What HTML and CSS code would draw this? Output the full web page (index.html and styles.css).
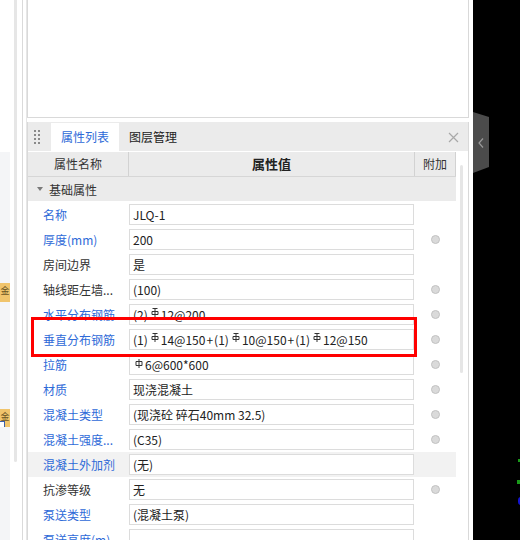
FILE: index.html
```html
<!DOCTYPE html>
<html lang="zh-CN">
<head>
<meta charset="utf-8">
<title>属性列表</title>
<link rel="stylesheet" href="styles.css">
</head>
<body>
<div class="app">
  <div class="side">
    <div class="side-pane">
      <div class="badge b1"><span>金</span></div>
      <div class="badge b2"><span>金</span><i></i></div>
    </div>
    <div class="side-scroll"></div>
    <div class="side-line l1"></div>
    <div class="side-line l2"></div>
  </div>

  <div class="main">
    <div class="canvas"></div>
    <div class="panel">
      <div class="phead">
        <div class="grip"><i></i><i></i><i></i><i></i><i></i><i></i><i></i><i></i></div>
        <div class="tab active">属性列表</div>
        <div class="tab">图层管理</div>
        <svg class="close" width="11" height="11" viewBox="0 0 11 11"><path d="M1 1L10 10M10 1L1 10" stroke="#a8a8a8" stroke-width="1.2" fill="none"/></svg>
      </div>
      <div class="pbody">
        <div class="grid">
          <div class="thead">
            <div class="th c1">属性名称</div>
            <div class="th c2">属性值</div>
            <div class="th c3">附加</div>
          </div>
          <div class="group">
            <svg class="tri" width="6" height="4" viewBox="0 0 6 4"><path d="M0 0H6L3 4Z" fill="#7a7a7a"/></svg>
            <span>基础属性</span>
          </div>

          <div class="row"><div class="lbl blue">名称</div><div class="val"><div class="box">JLQ-1</div></div><div class="add"></div></div>
          <div class="row"><div class="lbl blue">厚度(mm)</div><div class="val"><div class="box">200</div></div><div class="add"><span class="dot"></span></div></div>
          <div class="row"><div class="lbl">房间边界</div><div class="val"><div class="box">是</div></div><div class="add"></div></div>
          <div class="row"><div class="lbl">轴线距左墙...</div><div class="val"><div class="box">(100)</div></div><div class="add"><span class="dot"></span></div></div>
          <div class="row"><div class="lbl blue">水平分布钢筋</div><div class="val"><div class="box">(2)<svg class="rb" width="8" height="9" viewBox="0 0 8 9"><path d="M1.5 0.5H6.5M4 0V9M1 3.5H7V6.5H1Z" stroke="#333" stroke-width="1" fill="none"/></svg>12@200</div></div><div class="add"><span class="dot"></span></div></div>
          <div class="row"><div class="lbl blue">垂直分布钢筋</div><div class="val"><div class="box">(1)<svg class="rb" width="8" height="9" viewBox="0 0 8 9"><path d="M1.5 0.5H6.5M4 0V9M1 3.5H7V6.5H1Z" stroke="#333" stroke-width="1" fill="none"/></svg>14@150<span class="plus">+</span>(1)<svg class="rb" width="8" height="9" viewBox="0 0 8 9"><path d="M1.5 0.5H6.5M4 0V9M1 3.5H7V6.5H1Z" stroke="#333" stroke-width="1" fill="none"/></svg>10@150<span class="plus">+</span>(1)<svg class="rb" width="8" height="9" viewBox="0 0 8 9"><path d="M1.5 0.5H6.5M4 0V9M1 3.5H7V6.5H1Z" stroke="#333" stroke-width="1" fill="none"/></svg>12@150</div></div><div class="add"><span class="dot"></span></div></div>
          <div class="row"><div class="lbl blue">拉筋</div><div class="val"><div class="box"><svg class="rb rb-a" width="8" height="9" viewBox="0 0 8 9"><path d="M4 0V9M1 2.5H7V6.5H1Z" stroke="#333" stroke-width="1" fill="none"/></svg>6@600*600</div></div><div class="add"><span class="dot"></span></div></div>
          <div class="row"><div class="lbl blue">材质</div><div class="val"><div class="box">现浇混凝土</div></div><div class="add"><span class="dot"></span></div></div>
          <div class="row"><div class="lbl blue">混凝土类型</div><div class="val"><div class="box">(现浇砼 碎石40mm 32.5)</div></div><div class="add"><span class="dot"></span></div></div>
          <div class="row"><div class="lbl blue">混凝土强度...</div><div class="val"><div class="box">(C35)</div></div><div class="add"><span class="dot"></span></div></div>
          <div class="row hl"><div class="lbl blue">混凝土外加剂</div><div class="val"><div class="box">(无)</div></div><div class="add"></div></div>
          <div class="row"><div class="lbl">抗渗等级</div><div class="val"><div class="box">无</div></div><div class="add"><span class="dot"></span></div></div>
          <div class="row"><div class="lbl blue">泵送类型</div><div class="val"><div class="box">(混凝土泵)</div></div><div class="add"></div></div>
          <div class="row"><div class="lbl blue">泵送高度(m)</div><div class="val"><div class="box"></div></div><div class="add"></div></div>

          <div class="redbox"></div>
        </div>
        <div class="vscroll"><div class="thumb"></div></div>
      </div>
    </div>
  </div>

  <div class="gutter"></div>

  <div class="dark">
    <div class="handle">
      <svg class="chev" width="6" height="10" viewBox="0 0 6 10"><path d="M5 0.5L1 5L5 9.5" stroke="#9a9a9a" stroke-width="1.2" fill="none"/></svg>
    </div>
    <span class="mark m1"></span>
    <span class="mark m2"></span>
    <span class="mark m3"></span>
  </div>
</div>
</body>
</html>
```

FILE: styles.css
```css
html, body {
  margin: 0;
  padding: 0;
}
body {
  width: 520px;
  height: 540px;
  overflow: hidden;
  background: #fff;
  font-family: "Noto Sans CJK SC", "Microsoft YaHei", sans-serif;
  font-size: 12px;
  color: #333;
}
.app {
  display: flex;
  height: 540px;
}

/* left strip */
.side {
  display: flex;
  width: 27px;
  flex: none;
}
.side-pane {
  width: 10px;
  margin-top: 152px;
  background: #f4f5f7;
  display: flex;
  flex-direction: column;
}
.badge {
  width: 10px;
  background: #f0c46c;
  overflow: hidden;
  position: relative;
}
.badge span {
  display: block;
  font-size: 9px;
  line-height: 16px;
  text-align: center;
  color: #6a5424;
}
.b1 {
  margin-top: 131px;
  height: 19px;
}
.b2 {
  margin-top: 107px;
  height: 18px;
}
.b2 i {
  position: absolute;
  left: 0;
  top: 12px;
  width: 4px;
  height: 5px;
  border: 1px solid #3b5fa8;
  border-left: none;
  background: #fff;
}
.side-scroll {
  width: 3px;
  height: 462px;
  margin-left: 4px;
  background: #e6e6e6;
  border-radius: 0 0 2px 2px;
}
.side-line {
  width: 1px;
}
.l1 {
  margin-left: 5px;
  background: #dadada;
}
.l2 {
  margin-left: 3px;
  background: #e6e6e6;
}

/* main */
.main {
  width: 442px;
  flex: none;
  display: flex;
  flex-direction: column;
}
.canvas {
  height: 118px;
  border: 1px solid #d9d9d9;
  border-top: none;
  box-sizing: border-box;
  flex: none;
}
.panel {
  margin-top: 4px;
  flex: 1;
  border-left: 1px solid #d9d9d9;
  border-right: 1px solid #d9d9d9;
  display: flex;
  flex-direction: column;
  min-height: 0;
}
.phead {
  height: 29px;
  flex: none;
  background: #ebebeb;
  display: flex;
  align-items: stretch;
}
.grip {
  width: 6px;
  margin: 8px 0 0 6px;
  height: 14px;
  display: grid;
  grid-template-columns: 2px 2px;
  column-gap: 2px;
  row-gap: 2px;
}
.grip i {
  width: 2px;
  height: 2px;
  background: #8a8a8a;
}
.tab {
  padding: 0 10px;
  line-height: 28px;
  margin-top: 1px;
  font-size: 12px;
  color: #222;
}
.tab.active {
  margin-left: 11px;
  background: #fff;
  color: #2e6ad8;
}
.close {
  margin: 10px 9px 0 auto;
}

.pbody {
  flex: 1;
  display: flex;
  min-height: 0;
}
.grid {
  width: 428px;
  flex: none;
  position: relative;
}
.thead {
  margin-top: 1px;
  display: grid;
  grid-template-columns: 101px 286px 41px;
  height: 25px;
  background: #ebebeb;
  border-bottom: 1px solid #d6d6d6;
  box-sizing: border-box;
}
.th {
  line-height: 24px;
  text-align: center;
  border-right: 1px solid #d2d2d2;
  color: #333;
}
.th.c2 {
  font-weight: bold;
  font-size: 13px;
  color: #222;
}
.group {
  height: 24px;
  margin-bottom: 1px;
  background: #ebebeb;
  display: flex;
  align-items: center;
  font-size: 12px;
  color: #333;
}
.tri {
  margin-left: 9px;
  margin-right: 6px;
}
.row {
  display: grid;
  grid-template-columns: 101px 286px 41px;
  height: 25px;
}
.row.hl {
  background: #f2f2f2;
}
.lbl {
  padding-left: 15px;
  line-height: 25px;
  white-space: nowrap;
  overflow: hidden;
  color: #333;
}
.lbl.blue {
  color: #2e6ad8;
}
.val {
  padding-top: 2px;
}
.box {
  width: 285px;
  height: 21px;
  box-sizing: border-box;
  border: 1px solid #dcdcdc;
  background: #fff;
  padding-left: 3px;
  line-height: 19px;
  color: #222;
  white-space: nowrap;
  overflow: hidden;
}
.rb {
  vertical-align: 3px;
  margin: 0 2px 0 3px;
}
.rb-a {
  margin-left: 2px;
  vertical-align: 2px;
}
.plus {
  margin: 0 1px;
}
.add {
  display: flex;
  align-items: center;
  justify-content: center;
}
.dot {
  width: 7px;
  height: 7px;
  border-radius: 50%;
  background: #dadada;
  border: 1px solid #c2c2c2;
  margin-left: -1px;
}
.redbox {
  position: absolute;
  left: 3px;
  top: 166px;
  width: 386px;
  height: 40px;
  border: 3px solid #ff0000;
  box-sizing: border-box;
}
.vscroll {
  flex: 1;
  padding-left: 4px;
}
.thumb {
  margin-top: 14px;
  width: 3px;
  height: 208px;
  background: #e6e6e6;
  border-radius: 2px;
}

.gutter {
  width: 4px;
  flex: none;
  background: #fff;
}
.dark {
  flex: 1;
  background: #000;
  position: relative;
}
.handle {
  position: absolute;
  left: 0;
  top: 112px;
  width: 16px;
  height: 61px;
  background: #4b4b4b;
  border-radius: 0 4px 4px 0;
  clip-path: polygon(0 0, 100% 5px, 100% calc(100% - 6px), 0 100%);
}
.chev {
  position: absolute;
  left: 5px;
  top: 26px;
}
.mark {
  position: absolute;
  width: 3px;
}
.m1 {
  left: 45px;
  top: 459px;
  height: 3px;
  background: #1a9a1a;
}
.m2 {
  left: 44px;
  top: 480px;
  height: 4px;
  background: #1a9a1a;
}
.m3 {
  left: 45px;
  top: 497px;
  height: 8px;
  background: #1414d0;
  border-radius: 3px 0 0 3px;
}
```
